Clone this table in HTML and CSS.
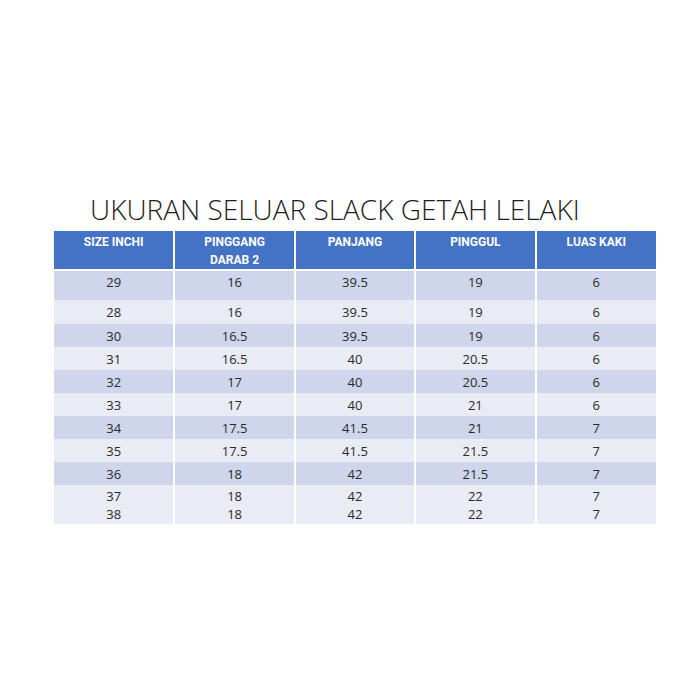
FILE: index.html
```html
<!DOCTYPE html>
<html>
<head>
<meta charset="utf-8">
<link rel="stylesheet" href="styles.css">
</head>
<body>
<div class="page">
  <h1 class="title">UKURAN SELUAR SLACK GETAH LELAKI</h1>
  <table class="size-table">
    <thead>
      <tr>
        <th>SIZE INCHI</th>
        <th>PINGGANG<br>DARAB 2</th>
        <th>PANJANG</th>
        <th>PINGGUL</th>
        <th>LUAS KAKI</th>
      </tr>
    </thead>
    <tbody>
      <tr class="dark first"><td>29</td><td>16</td><td>39.5</td><td>19</td><td>6</td></tr>
      <tr class="light r24"><td>28</td><td>16</td><td>39.5</td><td>19</td><td>6</td></tr>
      <tr class="dark"><td>30</td><td>16.5</td><td>39.5</td><td>19</td><td>6</td></tr>
      <tr class="light"><td>31</td><td>16.5</td><td>40</td><td>20.5</td><td>6</td></tr>
      <tr class="dark"><td>32</td><td>17</td><td>40</td><td>20.5</td><td>6</td></tr>
      <tr class="light"><td>33</td><td>17</td><td>40</td><td>21</td><td>6</td></tr>
      <tr class="dark"><td>34</td><td>17.5</td><td>41.5</td><td>21</td><td>7</td></tr>
      <tr class="light"><td>35</td><td>17.5</td><td>41.5</td><td>21.5</td><td>7</td></tr>
      <tr class="dark"><td>36</td><td>18</td><td>42</td><td>21.5</td><td>7</td></tr>
      <tr class="light last"><td>37<br>38</td><td>18<br>18</td><td>42<br>42</td><td>22<br>22</td><td>7<br>7</td></tr>
    </tbody>
  </table>
</div>
</body>
</html>
```
FILE: styles.css
```css
html, body {
  margin: 0;
  padding: 0;
  background: #ffffff;
}

.page {
  width: 700px;
  height: 700px;
  padding-top: 194px;
  box-sizing: border-box;
  display: flex;
  flex-direction: column;
  align-items: flex-start;
}

.title {
  margin: 0 0 7px 90px;
  font-family: "Open Sans", "Liberation Sans", sans-serif;
  font-weight: 300;
  font-size: 28px;
  line-height: 30px;
  color: #1e1e1e;
  letter-spacing: 0;
  white-space: nowrap;
}

.size-table {
  margin-left: 54px;
  width: 602px;
  table-layout: fixed;
  border-collapse: collapse;
  font-family: "Open Sans", "Liberation Sans", sans-serif;
}

.size-table th {
  background: #4472c4;
  color: #ffffff;
  font-family: Roboto, "Liberation Sans", sans-serif;
  font-weight: 700;
  font-size: 12px;
  line-height: 18px;
  height: 38px;
  padding: 2px 0 0 0;
  box-sizing: border-box;
  vertical-align: top;
  text-align: center;
  border-bottom: 2px solid #ffffff;
}

.size-table th + th,
.size-table td + td {
  border-left: 2px solid #ffffff;
}

.size-table td {
  font-size: 13px;
  line-height: 18px;
  color: #2a2a2a;
  text-align: center;
  vertical-align: middle;
  height: 23px;
  padding: 0;
  box-sizing: border-box;
}

.size-table tr.dark td {
  background: #cfd5ea;
}

.size-table tr.light td {
  background: #e9ebf5;
}

.size-table tr.first td {
  height: 30px;
  vertical-align: top;
  padding-top: 2px;
}

.size-table tr.r24 td {
  height: 24px;
}

.size-table tr.last td {
  height: 39px;
  vertical-align: top;
  padding-top: 2px;
}
```
